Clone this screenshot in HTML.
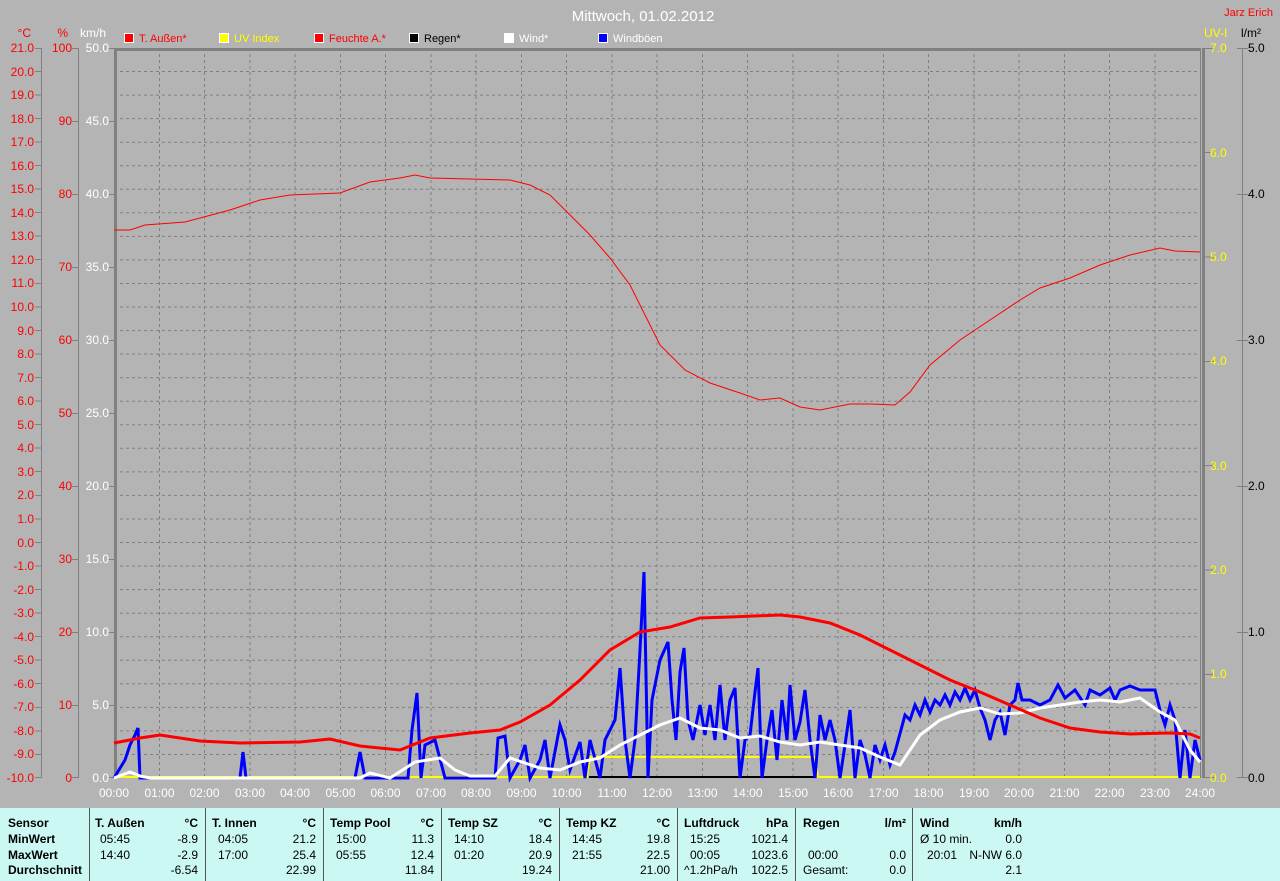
<!DOCTYPE html>
<html><head><meta charset="utf-8"><style>
html,body{margin:0;padding:0;width:1280px;height:881px;overflow:hidden;background:#b4b4b4;font-family:"Liberation Sans",sans-serif}
svg{position:absolute;left:0;top:0}
#tbl{position:absolute;left:0;top:808px;width:1280px;height:73px;background:#ccf8f4;font-size:12px;color:#000}
.c{position:absolute;top:0;height:73px;border-left:1px solid #555}
.t{position:absolute;white-space:nowrap}
.b{font-weight:bold}
</style></head><body>
<svg width="1280" height="808" font-family="Liberation Sans, sans-serif" font-size="12">
<rect width="1280" height="808" fill="#b4b4b4"/>
<text x="643" y="21" fill="#fff" font-size="15" text-anchor="middle">Mittwoch, 01.02.2012</text>
<text x="1273" y="16" fill="#f00" font-size="11" text-anchor="end">Jarz Erich</text>
<!-- legend -->
<g font-size="11">
<rect x="124.5" y="33.5" width="9" height="9" fill="#f00" stroke="#fff"/><text x="139" y="42" fill="#f00">T. Außen*</text>
<rect x="219.5" y="33.5" width="9" height="9" fill="#ff0" stroke="#fff"/><text x="234" y="42" fill="#ff0">UV Index</text>
<rect x="314.5" y="33.5" width="9" height="9" fill="#f00" stroke="#fff"/><text x="329" y="42" fill="#f00">Feuchte A.*</text>
<rect x="409.5" y="33.5" width="9" height="9" fill="#000" stroke="#fff"/><text x="424" y="42" fill="#000">Regen*</text>
<rect x="504.5" y="33.5" width="9" height="9" fill="#fff" stroke="#fff"/><text x="519" y="42" fill="#fff">Wind*</text>
<rect x="598.5" y="33.5" width="9" height="9" fill="#00f" stroke="#fff"/><text x="613" y="42" fill="#fff">Windböen</text>
</g>
<text x="31" y="37" fill="#f00" text-anchor="end">°C</text>
<text x="68" y="37" fill="#f00" text-anchor="end">%</text>
<text x="106" y="37" fill="#fff" text-anchor="end">km/h</text>
<text x="1204" y="37" fill="#ff0">UV-I</text>
<text x="1241" y="37" fill="#000">l/m²</text>
<!-- grid -->
<g stroke="#808080" stroke-dasharray="3,3" stroke-width="1">
<path d="M114 71.5H1200M114 95.1H1200M114 118.6H1200M114 142.2H1200M114 165.7H1200M114 189.3H1200M114 212.8H1200M114 236.4H1200M114 259.9H1200M114 283.5H1200M114 307H1200M114 330.6H1200M114 354.1H1200M114 377.7H1200M114 401.2H1200M114 424.8H1200M114 448.3H1200M114 471.9H1200M114 495.4H1200M114 519H1200M114 542.5H1200M114 566.1H1200M114 589.6H1200M114 613.2H1200M114 636.7H1200M114 660.3H1200M114 683.8H1200M114 707.4H1200M114 730.9H1200M114 754.5H1200"/>
<path d="M159.5 48V778M204.5 48V778M250 48V778M295 48V778M340.5 48V778M385.5 48V778M431 48V778M476 48V778M521.5 48V778M566.5 48V778M612 48V778M657 48V778M702.5 48V778M747.5 48V778M793 48V778M838 48V778M883.5 48V778M928.5 48V778M974 48V778M1019 48V778M1064.5 48V778M1109.5 48V778M1155 48V778"/>
</g>
<!-- axes -->
<g stroke="#808080" stroke-width="1" fill="none">
<path d="M41.5 48V778M78.5 48V778M1242.5 48V778M1200.5 48V778"/>
<path d="M35 48.5H41M35 71.5H41M35 95H41M35 118.5H41M35 142H41M35 165.5H41M35 189H41M35 212.5H41M35 236H41M35 259.5H41M35 283.5H41M35 307H41M35 330.5H41M35 354H41M35 377.5H41M35 401H41M35 424.5H41M35 448H41M35 471.5H41M35 495.5H41M35 519H41M35 542.5H41M35 566H41M35 589.5H41M35 613H41M35 636.5H41M35 660H41M35 683.5H41M35 707.5H41M35 731H41M35 754.5H41M35 777.5H41"/>
<path d="M72 48.5H78M72 121.5H78M72 194.5H78M72 267.5H78M72 340.5H78M72 413.5H78M72 486.5H78M72 559.5H78M72 632.5H78M72 705.5H78M72 777.5H78"/>
<path d="M108 48.5H114M108 121.5H114M108 194.5H114M108 267.5H114M108 340.5H114M108 413.5H114M108 486.5H114M108 559.5H114M108 632.5H114M108 705.5H114M108 777.5H114"/>
<path d="M1204 48.5H1214M1204 152.5H1214M1204 257H1214M1204 361.5H1214M1204 465.5H1214M1204 570H1214M1204 674.5H1214M1204 777.5H1214"/>
<path d="M1237 48.5H1248M1237 194.5H1248M1237 340.5H1248M1237 486.5H1248M1237 632.5H1248M1237 777.5H1248"/>
</g>
<path d="M115.5 48V778M114 49.5H1200M1203.5 48V778" stroke="#808080" stroke-width="3" fill="none"/>
<!-- labels -->
<g fill="#f00" text-anchor="end">
<text x="34" y="52">21.0</text><text x="34" y="76">20.0</text><text x="34" y="99">19.0</text><text x="34" y="123">18.0</text><text x="34" y="146">17.0</text><text x="34" y="170">16.0</text><text x="34" y="193">15.0</text><text x="34" y="217">14.0</text><text x="34" y="240">13.0</text><text x="34" y="264">12.0</text><text x="34" y="287">11.0</text><text x="34" y="311">10.0</text><text x="34" y="335">9.0</text><text x="34" y="358">8.0</text><text x="34" y="382">7.0</text><text x="34" y="405">6.0</text><text x="34" y="429">5.0</text><text x="34" y="452">4.0</text><text x="34" y="476">3.0</text><text x="34" y="499">2.0</text><text x="34" y="523">1.0</text><text x="34" y="547">0.0</text><text x="34" y="570">-1.0</text><text x="34" y="594">-2.0</text><text x="34" y="617">-3.0</text><text x="34" y="641">-4.0</text><text x="34" y="664">-5.0</text><text x="34" y="688">-6.0</text><text x="34" y="711">-7.0</text><text x="34" y="735">-8.0</text><text x="34" y="758">-9.0</text><text x="34" y="782">-10.0</text>
<text x="72" y="52">100</text><text x="72" y="125">90</text><text x="72" y="198">80</text><text x="72" y="271">70</text><text x="72" y="344">60</text><text x="72" y="417">50</text><text x="72" y="490">40</text><text x="72" y="563">30</text><text x="72" y="636">20</text><text x="72" y="709">10</text><text x="72" y="782">0</text>
</g>
<g fill="#fff" text-anchor="end">
<text x="109" y="52">50.0</text><text x="109" y="125">45.0</text><text x="109" y="198">40.0</text><text x="109" y="271">35.0</text><text x="109" y="344">30.0</text><text x="109" y="417">25.0</text><text x="109" y="490">20.0</text><text x="109" y="563">15.0</text><text x="109" y="636">10.0</text><text x="109" y="709">5.0</text><text x="109" y="782">0.0</text>
</g>
<g fill="#ff0">
<text x="1210" y="52">7.0</text><text x="1210" y="157">6.0</text><text x="1210" y="261">5.0</text><text x="1210" y="365">4.0</text><text x="1210" y="470">3.0</text><text x="1210" y="574">2.0</text><text x="1210" y="678">1.0</text><text x="1210" y="782">0.0</text>
</g>
<g fill="#000">
<text x="1248" y="52">5.0</text><text x="1248" y="198">4.0</text><text x="1248" y="344">3.0</text><text x="1248" y="490">2.0</text><text x="1248" y="636">1.0</text><text x="1248" y="782">0.0</text>
</g>
<g fill="#fff" text-anchor="middle">
<text x="114" y="797">00:00</text><text x="159.5" y="797">01:00</text><text x="204.5" y="797">02:00</text><text x="250" y="797">03:00</text><text x="295" y="797">04:00</text><text x="340.5" y="797">05:00</text><text x="385.5" y="797">06:00</text><text x="431" y="797">07:00</text><text x="476" y="797">08:00</text><text x="521.5" y="797">09:00</text><text x="566.5" y="797">10:00</text><text x="612" y="797">11:00</text><text x="657" y="797">12:00</text><text x="702.5" y="797">13:00</text><text x="747.5" y="797">14:00</text><text x="793" y="797">15:00</text><text x="838" y="797">16:00</text><text x="883.5" y="797">17:00</text><text x="928.5" y="797">18:00</text><text x="974" y="797">19:00</text><text x="1019" y="797">20:00</text><text x="1064.5" y="797">21:00</text><text x="1109.5" y="797">22:00</text><text x="1155" y="797">23:00</text><text x="1200" y="797">24:00</text>
</g>
<!-- data -->
<polyline fill="none" stroke="#f00" stroke-width="1" points="114,230 130,230 145,225 185,222 200,218 230,210 260,200 290,195 340,193 370,182 400,178 415,175 430,178 510,180 530,185 550,195 570,215 590,235 610,258 630,285 645,315 660,345 685,370 710,383 740,393 760,400 780,398 800,407 820,410 850,404 870,404 895,405 910,392 930,365 960,340 990,320 1020,300 1040,288 1070,278 1100,265 1130,255 1160,248 1175,251 1200,252"/>
<polyline fill="none" stroke="#000" stroke-width="2" points="589,777 815,777"/>
<polyline fill="none" stroke="#ff0" stroke-width="2" points="114,777 587,777 590,757 815,757 818,777 1200,777"/>
<polyline fill="none" stroke="#00f" stroke-width="3" points="114,778 125,760 130,745 135,735 138,728 140,778 240,778 243,752 246,778 355,778 360,752 365,778 408,778 412,730 417,693 421,778 425,745 435,740 445,778 495,778 498,738 505,736 510,778 520,760 525,745 530,778 540,760 545,740 550,778 560,725 565,740 570,770 580,742 585,778 590,740 600,778 605,740 615,720 620,668 625,740 630,778 635,740 640,650 644,572 648,778 652,700 660,660 668,642 672,700 676,740 680,672 684,648 688,720 693,740 700,705 705,735 710,705 715,740 720,685 725,740 730,700 735,688 740,778 745,740 750,735 755,692 758,668 762,778 767,740 772,710 777,760 782,700 787,740 790,685 795,740 800,722 805,690 810,740 815,778 820,715 825,740 830,720 835,740 840,778 845,745 850,710 855,778 860,740 865,755 870,778 875,745 880,760 885,745 890,765 895,752 905,715 910,720 915,705 920,715 925,700 930,712 935,700 940,705 945,695 950,705 955,692 960,700 965,688 970,700 975,690 980,708 985,720 990,740 995,720 1000,712 1005,735 1010,705 1015,700 1018,683 1022,700 1030,700 1040,705 1050,700 1058,685 1065,698 1075,690 1085,705 1090,690 1100,695 1110,688 1115,700 1120,690 1130,686 1140,690 1155,690 1160,710 1165,725 1170,705 1175,720 1180,778 1185,730 1190,778 1195,740 1200,760"/>
<polyline fill="none" stroke="#fff" stroke-width="3" points="114,778 130,772 140,776 150,778 360,778 370,773 390,778 415,762 440,758 455,770 470,776 495,776 510,758 540,768 560,770 580,762 600,758 620,745 640,735 660,725 680,718 700,728 720,730 740,738 760,736 780,742 800,745 820,742 840,745 860,748 880,757 900,765 910,750 920,735 940,720 960,712 980,708 1000,714 1020,713 1040,708 1060,705 1080,702 1100,700 1120,702 1140,698 1160,712 1175,720 1190,750 1200,762"/>
<polyline fill="none" stroke="#f00" stroke-width="3" points="114,743 140,738 160,735 200,741 240,743 300,742 330,739 360,746 400,750 430,738 470,733 500,730 520,722 550,705 580,680 610,650 640,632 670,627 700,618 730,617 780,615 800,617 830,623 860,635 890,650 920,665 950,680 980,692 1010,705 1040,718 1070,728 1100,732 1130,734 1170,733 1190,734 1200,738"/>
</svg>
<div id="tbl">
<div class="c" style="left:89px"></div><div class="c" style="left:205px"></div><div class="c" style="left:323px"></div><div class="c" style="left:441px"></div><div class="c" style="left:559px"></div><div class="c" style="left:677px"></div><div class="c" style="left:795px"></div><div class="c" style="left:912px"></div>
<div class="t b" style="left:8px;top:8px">Sensor</div><div class="t b" style="left:8px;top:24px">MinWert</div><div class="t b" style="left:8px;top:40px">MaxWert</div><div class="t b" style="left:8px;top:55px">Durchschnitt</div>

<div class="t b" style="left:95px;top:8px">T. Außen</div><div class="t b" style="right:1082px;top:8px">°C</div>
<div class="t" style="left:100px;top:24px">05:45</div><div class="t" style="right:1082px;top:24px">-8.9</div>
<div class="t" style="left:100px;top:40px">14:40</div><div class="t" style="right:1082px;top:40px">-2.9</div>
<div class="t" style="right:1082px;top:55px">-6.54</div>

<div class="t b" style="left:212px;top:8px">T. Innen</div><div class="t b" style="right:964px;top:8px">°C</div>
<div class="t" style="left:218px;top:24px">04:05</div><div class="t" style="right:964px;top:24px">21.2</div>
<div class="t" style="left:218px;top:40px">17:00</div><div class="t" style="right:964px;top:40px">25.4</div>
<div class="t" style="right:964px;top:55px">22.99</div>

<div class="t b" style="left:330px;top:8px">Temp Pool</div><div class="t b" style="right:846px;top:8px">°C</div>
<div class="t" style="left:336px;top:24px">15:00</div><div class="t" style="right:846px;top:24px">11.3</div>
<div class="t" style="left:336px;top:40px">05:55</div><div class="t" style="right:846px;top:40px">12.4</div>
<div class="t" style="right:846px;top:55px">11.84</div>

<div class="t b" style="left:448px;top:8px">Temp SZ</div><div class="t b" style="right:728px;top:8px">°C</div>
<div class="t" style="left:454px;top:24px">14:10</div><div class="t" style="right:728px;top:24px">18.4</div>
<div class="t" style="left:454px;top:40px">01:20</div><div class="t" style="right:728px;top:40px">20.9</div>
<div class="t" style="right:728px;top:55px">19.24</div>

<div class="t b" style="left:566px;top:8px">Temp KZ</div><div class="t b" style="right:610px;top:8px">°C</div>
<div class="t" style="left:572px;top:24px">14:45</div><div class="t" style="right:610px;top:24px">19.8</div>
<div class="t" style="left:572px;top:40px">21:55</div><div class="t" style="right:610px;top:40px">22.5</div>
<div class="t" style="right:610px;top:55px">21.00</div>

<div class="t b" style="left:684px;top:8px">Luftdruck</div><div class="t b" style="right:492px;top:8px">hPa</div>
<div class="t" style="left:690px;top:24px">15:25</div><div class="t" style="right:492px;top:24px">1021.4</div>
<div class="t" style="left:690px;top:40px">00:05</div><div class="t" style="right:492px;top:40px">1023.6</div>
<div class="t" style="left:684px;top:55px">^1.2hPa/h</div><div class="t" style="right:492px;top:55px">1022.5</div>

<div class="t b" style="left:803px;top:8px">Regen</div><div class="t b" style="right:374px;top:8px">l/m²</div>
<div class="t" style="left:808px;top:40px">00:00</div><div class="t" style="right:374px;top:40px">0.0</div>
<div class="t" style="left:803px;top:55px">Gesamt:</div><div class="t" style="right:374px;top:55px">0.0</div>

<div class="t b" style="left:920px;top:8px">Wind</div><div class="t b" style="right:258px;top:8px">km/h</div>
<div class="t" style="left:920px;top:24px">Ø 10 min.</div><div class="t" style="right:258px;top:24px">0.0</div>
<div class="t" style="left:927px;top:40px">20:01</div><div class="t" style="right:258px;top:40px">N-NW 6.0</div>
<div class="t" style="right:258px;top:55px">2.1</div>
</div>
</body></html>
